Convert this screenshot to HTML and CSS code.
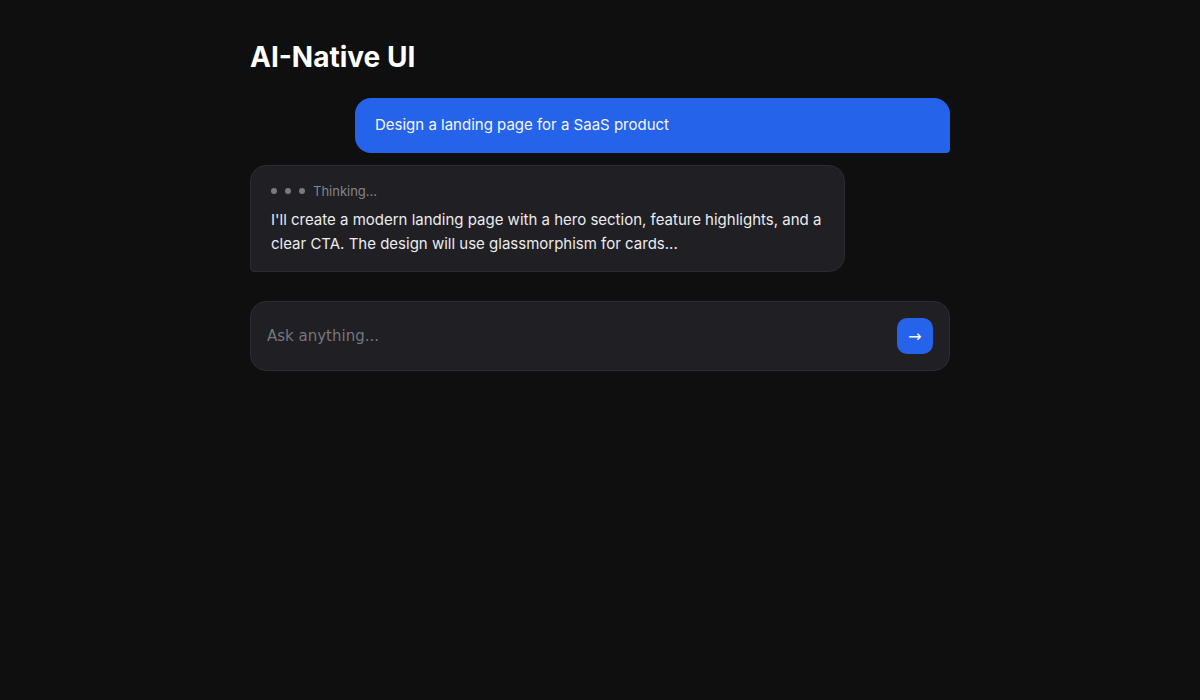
FILE: index.html
```html
<!DOCTYPE html>
<html lang="en">
<head>
<meta charset="UTF-8" />
<meta name="viewport" content="width=device-width, initial-scale=1" />
<title>AI-Native UI</title>
<link rel="stylesheet" href="styles.css">
</head>
<body>

  <main class="chat">
    <h1>AI-Native UI</h1>

    <div class="messages">
      <div class="msg user">Design a landing page for a SaaS product</div>

      <div class="msg ai">
        <div class="thinking">
          <span class="dot"></span><span class="dot"></span><span class="dot"></span>
          <span class="label">Thinking...</span>
        </div>
        <div class="text">I'll create a modern landing page with a hero section, feature highlights, and a clear CTA. The design will use glassmorphism for cards...</div>
      </div>
    </div>

    <form class="composer" onsubmit="return false">
      <input type="text" placeholder="Ask anything..." />
      <button type="submit">→</button>
    </form>
  </main>

</body>
</html>
```

FILE: styles.css
```css
/* Reset + basic */
* {
  box-sizing: border-box;
}
body {
  margin: 0;
  padding: 0;
  background: #0f0f0f;
  color: #fff;
  font-family: Inter, "Liberation Sans", Arial, sans-serif;
  min-height: 100vh;
}

/* Layout */
.chat {
  width: 700px;
  margin: 0 auto;
  padding-top: 37px;
}
.chat h1 {
  margin: 0 0 21px;
  font-size: 28px;
  line-height: 40px;
  font-weight: 700;
}

/* Messages */
.messages {
  display: flex;
  flex-direction: column;
  gap: 12px;
}
.msg {
  max-width: 85%;
  font-size: 15px;
  line-height: 24px;
  padding: 16px 20px;
}
.msg.user {
  align-self: flex-end;
  width: 85%;
  background: #2563eb;
  color: #f5f7ff;
  border-radius: 16px 16px 4px 16px;
  padding: 15px 20px 16px;
}
.msg.ai {
  align-self: flex-start;
  width: 85%;
  background: #1f1f24;
  border: 1px solid #2b2b30;
  border-radius: 16px 16px 16px 4px;
  color: #ececef;
  padding: 15px 20px 15px;
}

/* Thinking indicator */
.thinking {
  display: flex;
  align-items: center;
  gap: 8px;
  height: 20px;
  margin-bottom: 7px;
}
.thinking .dot {
  width: 6px;
  height: 6px;
  border-radius: 50%;
  background: #7a7a80;
}
.thinking .label {
  font-size: 13px;
  color: #85858b;
}

/* Composer */
.composer {
  margin-top: 29px;
  display: flex;
  align-items: center;
  gap: 12px;
  background: #1f1f24;
  border: 1px solid #2b2b30;
  border-radius: 16px;
  padding: 16px;
  height: 70px;
}
.composer input {
  flex: 1;
  background: transparent;
  border: none;
  outline: none;
  color: #fff;
  font-family: "DejaVu Sans", sans-serif;
  font-size: 15px;
  padding: 0;
}
.composer input::placeholder {
  color: #76767c;
}
.composer button {
  width: 36px;
  height: 36px;
  border: none;
  border-radius: 10px;
  background: #2563eb;
  color: #fff;
  font-family: "DejaVu Sans", sans-serif;
  font-size: 16px;
  cursor: pointer;
  padding: 0;
}
```
